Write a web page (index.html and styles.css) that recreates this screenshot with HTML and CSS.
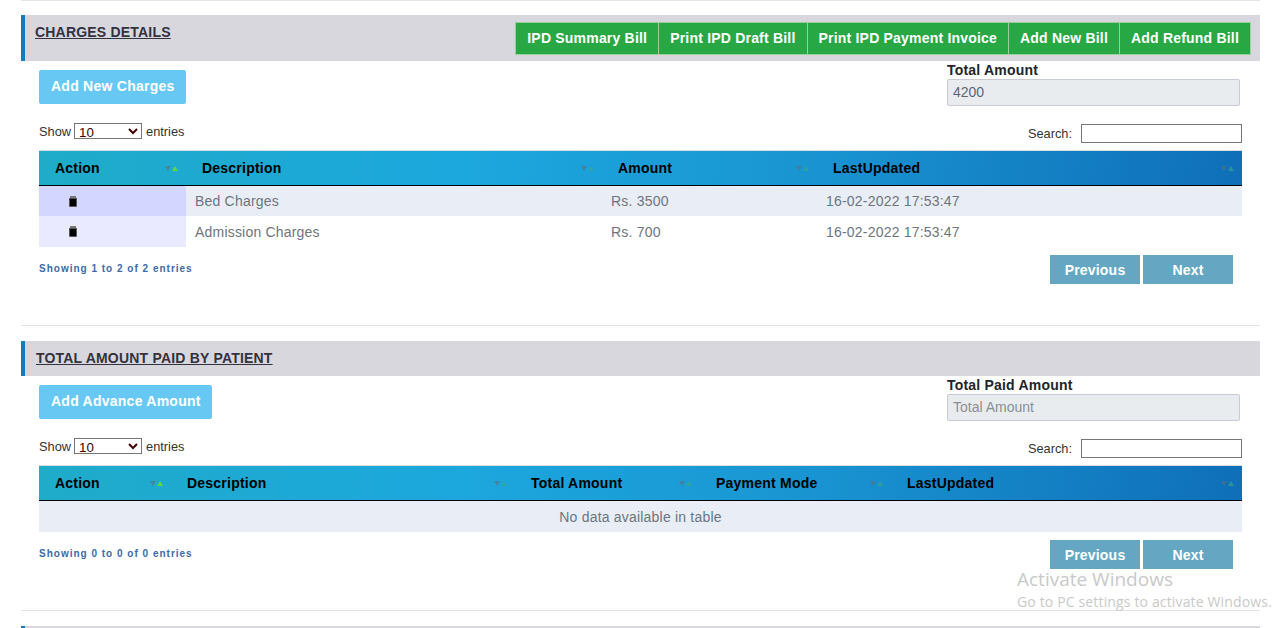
FILE: index.html
```html
<!DOCTYPE html>
<html lang="en">
<head>
<meta charset="utf-8">
<title>Charges Details</title>
<link rel="stylesheet" href="styles.css">
</head>
<body>
<main class="page">
  <hr class="rule rule-top">
  <section class="panel panel-one">
    <header class="head head-tall">
      <h2 class="title">CHARGES DETAILS</h2>
      <div class="bill-btns">
        <button class="bill">IPD Summary Bill</button><button class="bill">Print IPD Draft Bill</button><button class="bill">Print IPD Payment Invoice</button><button class="bill">Add New Bill</button><button class="bill">Add Refund Bill</button>
      </div>
    </header>
    <div class="toolbar">
      <button class="add add-charges">Add New Charges</button>
      <label class="total"><span class="total-label">Total Amount</span><input class="total-input" value="4200" readonly></label>
    </div>
    <div class="controls">
      <div class="length">Show <select class="sel"><option>10</option></select> entries</div>
      <div class="search">Search: <input class="search-input"></div>
    </div>
    <table class="grid">
      <colgroup><col class="c147"><col class="c416"><col class="c215"><col></colgroup>
      <thead><tr>
        <th><div class="th"><span>Action</span><span class="sort sort-active"><i class="dn"></i><i class="up"></i></span></div></th>
        <th><div class="th"><span>Description</span><span class="sort"><i class="dn"></i><i class="up"></i></span></div></th>
        <th><div class="th"><span>Amount</span><span class="sort"><i class="dn"></i><i class="up"></i></span></div></th>
        <th><div class="th"><span>LastUpdated</span><span class="sort"><i class="dn"></i><i class="up"></i></span></div></th>
      </tr></thead>
      <tbody>
        <tr class="odd">
          <td class="act"><svg class="trash" viewBox="0 0 8 11"><path class="lid" d="M1 0h6v2H1z"/><path class="rim" d="M0 2h8v8a1 1 0 0 1-1 1H1a1 1 0 0 1-1-1z"/><path d="M1 3h6v7H1z"/></svg></td>
          <td>Bed Charges</td><td>Rs. 3500</td><td>16-02-2022 17:53:47</td>
        </tr>
        <tr class="even">
          <td class="act"><svg class="trash" viewBox="0 0 8 11"><path class="lid" d="M1 0h6v2H1z"/><path class="rim" d="M0 2h8v8a1 1 0 0 1-1 1H1a1 1 0 0 1-1-1z"/><path d="M1 3h6v7H1z"/></svg></td>
          <td>Admission Charges</td><td>Rs. 700</td><td>16-02-2022 17:53:47</td>
        </tr>
      </tbody>
    </table>
    <div class="foot">
      <div class="info">Showing 1 to 2 of 2 entries</div>
      <div class="pager"><button class="page-btn">Previous</button><button class="page-btn">Next</button></div>
    </div>
  </section>
  <hr class="rule rule-mid">
  <section class="panel panel-two">
    <header class="head head-short">
      <h2 class="title title-short">TOTAL AMOUNT PAID BY PATIENT</h2>
    </header>
    <div class="toolbar toolbar-two">
      <button class="add add-advance">Add Advance Amount</button>
      <label class="total"><span class="total-label">Total Paid Amount</span><input class="total-input" placeholder="Total Amount" readonly></label>
    </div>
    <div class="controls">
      <div class="length">Show <select class="sel"><option>10</option></select> entries</div>
      <div class="search">Search: <input class="search-input"></div>
    </div>
    <table class="grid">
      <colgroup><col class="c132"><col class="c344"><col class="c185"><col class="c191"><col></colgroup>
      <thead><tr>
        <th><div class="th"><span>Action</span><span class="sort sort-active"><i class="dn"></i><i class="up"></i></span></div></th>
        <th><div class="th"><span>Description</span><span class="sort"><i class="dn"></i><i class="up"></i></span></div></th>
        <th><div class="th"><span>Total Amount</span><span class="sort"><i class="dn"></i><i class="up"></i></span></div></th>
        <th><div class="th"><span>Payment Mode</span><span class="sort"><i class="dn"></i><i class="up"></i></span></div></th>
        <th><div class="th"><span>LastUpdated</span><span class="sort"><i class="dn"></i><i class="up"></i></span></div></th>
      </tr></thead>
      <tbody>
        <tr class="odd"><td class="empty" colspan="5">No data available in table</td></tr>
      </tbody>
    </table>
    <div class="foot">
      <div class="info">Showing 0 to 0 of 0 entries</div>
      <div class="pager"><button class="page-btn">Previous</button><button class="page-btn">Next</button></div>
    </div>
  </section>
  <hr class="rule rule-end">
  <div class="head-next"></div>
</main>
<div class="watermark">
  <div class="wm-big">Activate Windows</div>
  <div class="wm-small">Go to PC settings to activate Windows.</div>
</div>
</body>
</html>
```
FILE: styles.css
```css
* { box-sizing: border-box; }
html, body { margin: 0; height: 628px; overflow: hidden; background: #fff; }
body { font-family: "Liberation Sans", Arial, sans-serif; font-size: 12.8px; color: #212529; }
.page { width: 1260px; padding-left: 21px; }
.rule { border: 0; margin: 0; height: 1px; background: #e4e4e6; }
.rule-top { margin-bottom: 14px; }
.rule-mid { margin-bottom: 15px; }
.rule-end { margin-bottom: 15px; }
.panel-one { height: 310px; }
.panel-two { height: 269px; }
.head { display: flex; justify-content: space-between; background: #d8d7dd; border-left: 4px solid #0f7dc2; }
.head-tall { height: 46px; }
.head-short { height: 35px; }
.head-next { height: 2px; background: #d8d7dd; border-left: 4px solid #0f7dc2; }
.title { margin: 9px 0 0 10px; font-size: 14px; line-height: 16px; font-weight: 700; color: #33323e; text-decoration: underline; letter-spacing: 0.2px; height: 16px; }
.title-short { margin-left: 11px; }
.bill-btns { display: flex; margin: 7px 9px 0 0; height: 33px; }
.bill { height: 33px; padding: 0 11px 1px; background: #28a745; border: 1px solid #9ad0a0; border-left-width: 0; color: #fff; font: 700 14px "Liberation Sans", Arial, sans-serif; letter-spacing: 0.2px; white-space: nowrap; }
.bill:first-child { border-left-width: 1px; }
.toolbar { display: flex; justify-content: space-between; height: 45px; padding: 2px 20px 0 18px; }
.toolbar-two { height: 45px; padding-top: 2px; }
.add { margin-top: 7px; height: 34px; padding: 0 11px 2px 12px; background: #67c9f3; border: 0; border-radius: 2px; color: #fff; font: 700 14px "Liberation Sans", Arial, sans-serif; letter-spacing: 0.25px; white-space: nowrap; }
.total { display: flex; flex-direction: column; width: 293px; }
.total-label { font-size: 14px; line-height: 15px; font-weight: 700; letter-spacing: 0.2px; color: #212529; }
.total-input { margin-top: 1px; height: 27px; padding: 0 5px 2px; background: #e9ecef; border: 1px solid #c6cbd6; border-radius: 2px; font: 14px "Liberation Sans", Arial, sans-serif; color: #5c6670; outline: 0; }
.total-input::placeholder { color: #8a8f96; opacity: 1; }
.controls { display: flex; justify-content: space-between; height: 35px; margin: 9px 18px 0 18px; padding-top: 8px; }
.length { display: flex; align-items: center; height: 16px; color: #333; }
.sel { width: 68px; height: 16px; margin: 0 4px 0 3px; padding: 0; font: 13.33px "Liberation Sans", Arial, sans-serif; color: #400; background: #fff; border: 1px solid #767676; }
.search { display: flex; align-items: center; gap: 9px; height: 19px; margin-top: 1px; color: #333; }
.search-input { width: 161px; height: 19px; padding: 0; border: 1px solid #767676; background: #fff; }
.grid { width: 1203px; margin-left: 18px; border-collapse: collapse; table-layout: fixed; font-size: 14px; }
.c147 { width: 147px; }
.c416 { width: 416px; }
.c215 { width: 215px; }
.c132 { width: 132px; }
.c344 { width: 344px; }
.c185 { width: 185px; }
.c191 { width: 191px; }
thead tr { background: linear-gradient(100deg, #1facc9 0%, #1ca7dd 35%, #1a98d4 60%, #0f6fb9 100%); }
th { height: 35px; padding: 0 8px 0 16px; border-top: 1px solid #d9dee5; border-bottom: 1px solid #000; font-weight: 700; text-align: left; color: #000; letter-spacing: 0.22px; }
.th { display: flex; justify-content: space-between; align-items: center; }
.sort { display: flex; gap: 1px; align-items: center; }
.sort i { display: block; width: 0; height: 0; border-left: 3px solid transparent; border-right: 3px solid transparent; }
.sort .dn { border-top: 5px solid rgba(90, 110, 130, .6); }
.sort .up { border-bottom: 5px solid rgba(60, 170, 130, .6); }
.sort-active .up { border-bottom-color: #5fd63f; }
td { height: 30px; padding: 0 9px; color: #6c757d; letter-spacing: 0.2px; }
tbody tr:nth-child(2) td { height: 31px; padding-top: 1px; }
.odd td { background: #e9edf6; }
.even td { background: #fff; }
.odd .act { background: #d3d6ff; }
.even .act { background: #e9eaff; }
.odd .act { padding: 2px 0 0 30px; line-height: 0; }
tbody .even .act { padding: 0 0 0 30px; line-height: 0; }
.trash { width: 8px; height: 11px; fill: #000; }
.trash .lid { fill: #777; }
.trash .rim { fill: #555; }
.empty { height: 31px; padding: 1px 0 0; text-align: center; }
.foot { display: flex; justify-content: space-between; padding: 8px 27px 0 18px; }
.info { margin-top: 8px; font-size: 10px; line-height: 12px; font-weight: 700; color: #3c6aa6; letter-spacing: 1px; }
.pager { display: flex; gap: 3px; }
.page-btn { width: 90px; height: 29px; padding: 1px 0 0; background: #65a7c2; border: 0; color: #fff; font: 700 14px "Liberation Sans", Arial, sans-serif; letter-spacing: 0.2px; }
.watermark { position: absolute; left: 1017px; top: 570px; color: #c9c9c9; font-family: "Open Sans", sans-serif; white-space: nowrap; }
.wm-big { font-size: 19px; line-height: 19px; }
.wm-small { font-size: 14px; line-height: 20px; margin-top: 3px; letter-spacing: 0.15px; }
```
